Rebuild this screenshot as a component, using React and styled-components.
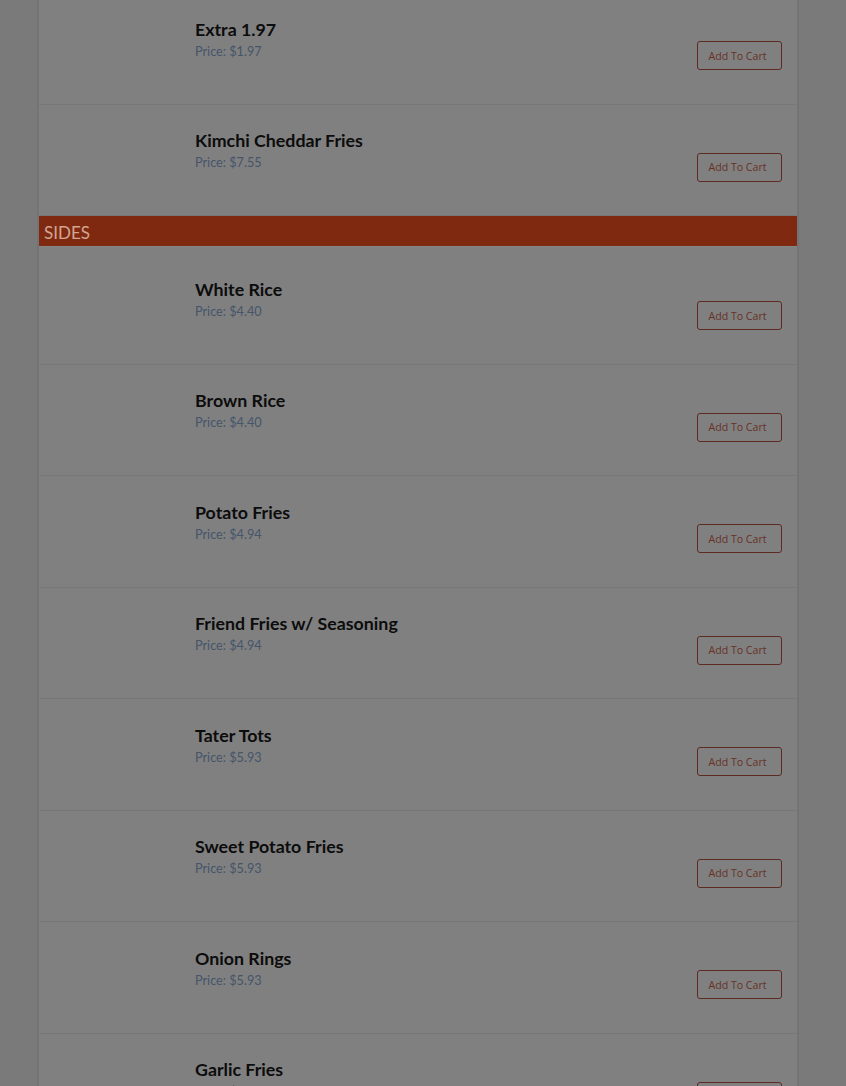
import React from "react";
import styled, { createGlobalStyle } from "styled-components";

const Global = createGlobalStyle`
  html, body { margin: 0; padding: 0; background: #7a7a7a; }
  body { font-family: Lato, "Noto Sans", sans-serif; overflow: hidden; }
`;

const Page = styled.div`
  width: 846px;
  height: 1086px;
  overflow: hidden;
  background: #7a7a7a;
`;

const Panel = styled.div`
  margin: -7px 0 0 38px;
  width: 758px;
  background: #808080;
  border-left: 1px solid #747474;
  border-right: 1px solid #747474;
  box-shadow: 0 0 2px rgba(0,0,0,0.15);
`;

const Row = styled.div`
  display: flex;
  height: 111.5px;
  border-bottom: 1px solid #777;
  box-sizing: border-box;
  padding: 0 15px 0 156px;
`;

const Info = styled.div`
  flex: 1;
  padding-top: 24.5px;
`;

const Title = styled.div`
  font-family: Lato, sans-serif;
  font-weight: 700;
  font-size: 17.8px;
  line-height: 22px;
  color: #0c0c0c;
`;

const Price = styled.div`
  font-family: Lato, sans-serif;
  font-size: 12.7px;
  line-height: 22px;
  color: #45556a;
`;

const Button = styled.button`
  align-self: flex-start;
  margin-top: 48px;
  width: 85px;
  height: 29px;
  border: 1px solid #5c2a20;
  border-radius: 3px;
  background: transparent;
  color: #673126;
  font-family: "Open Sans", sans-serif;
  font-size: 10.6px;
  padding: 0 4px 0 0;
`;

const Header = styled.div`
  height: 30px;
  background: #7f2a10;
  color: #d3a595;
  font-family: Lato, sans-serif;
  font-size: 17px;
  line-height: 34px;
  padding-left: 5px;
  margin-bottom: 7px;
  box-shadow: 0 1px 0 #868686;
`;

const before = [
  ["Extra 1.97", "$1.97"],
  ["Kimchi Cheddar Fries", "$7.55"],
];
const sides = [
  ["White Rice", "$4.40"],
  ["Brown Rice", "$4.40"],
  ["Potato Fries", "$4.94"],
  ["Friend Fries w/ Seasoning", "$4.94"],
  ["Tater Tots", "$5.93"],
  ["Sweet Potato Fries", "$5.93"],
  ["Onion Rings", "$5.93"],
  ["Garlic Fries", "$5.93"],
];

const Item = ({ name, price }) => (
  <Row>
    <Info>
      <Title>{name}</Title>
      <Price>Price: {price}</Price>
    </Info>
    <Button>Add To Cart</Button>
  </Row>
);

export default function App() {
  return (
    <Page>
      <Global />
      <Panel>
        {before.map(([n, p]) => <Item key={n} name={n} price={p} />)}
        <Header>SIDES</Header>
        {sides.map(([n, p]) => <Item key={n} name={n} price={p} />)}
      </Panel>
    </Page>
  );
}
